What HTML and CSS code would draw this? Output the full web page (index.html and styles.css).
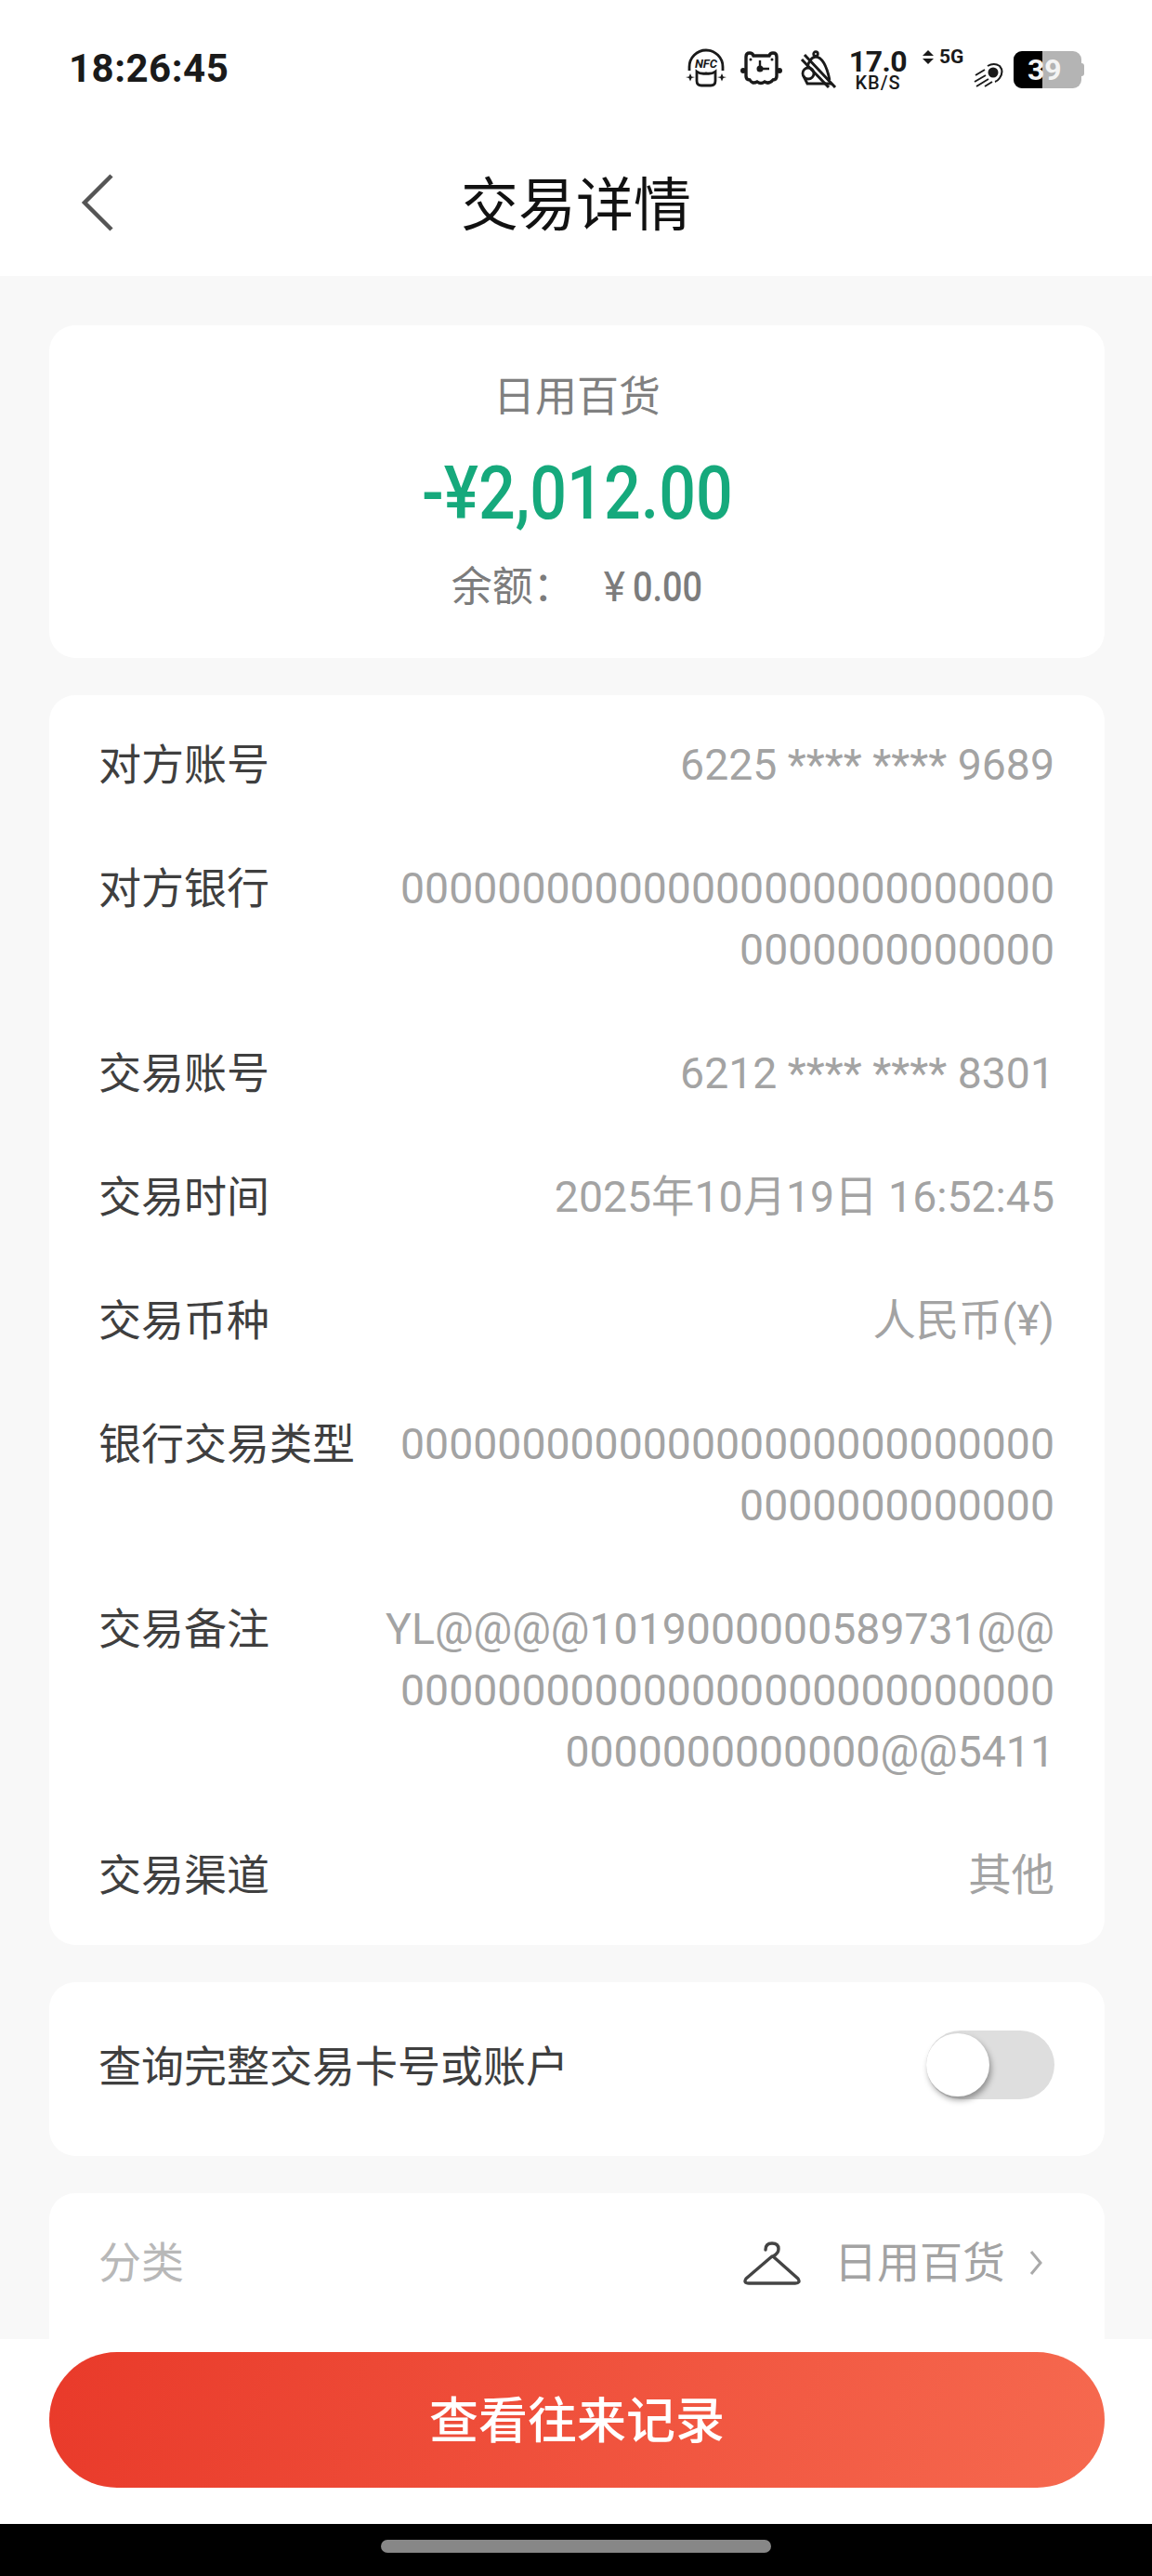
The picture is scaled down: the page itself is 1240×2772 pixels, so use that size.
FILE: index.html
```html
<!DOCTYPE html>
<html lang="zh-CN">

<head>
    <meta charset="UTF-8" />
    <meta name="viewport" content="width=device-width, initial-scale=1.0" />
    <title>交易详情</title>
    <link rel="stylesheet" href="styles.css">
</head>

<body>
    <div class="phone">
        <div class="statusbar">
            <span class="clock">18:26:45</span>
            <div class="status-icons">
                <svg class="ico ico-nfc" viewBox="0 0 42 40" width="42" height="40" fill="none" stroke="#1a1a1a" stroke-width="2.8">
                    <path d="M3 23 V19 A18 18 0 0 1 39 19 V23" />
                    <path d="M11 24 Q15 27 21 26 Q27 27 31 24 V34 Q31 39 26 39 H16 Q11 39 11 34 Z" />
                    <path d="M4 26 L5.5 29.5 L9 30 L5.5 31 L4 34.500 L2.500 31 L-1 30 L2.500 29.500 Z" fill="#1a1a1a" stroke="none" />
                    <path d="M38 26 L39.500 29.500 L43 30 L39.500 31 L38 34.500 L36.500 31 L33 30 L36.500 29.500 Z" fill="#1a1a1a" stroke="none" />
                    <text x="21" y="20" class="nfc">NFC</text>
                </svg>
                <svg class="ico ico-cat" viewBox="0 0 45 37" width="45" height="37" fill="none" stroke="#1a1a1a" stroke-width="3.4">
                    <path d="M6 6 Q6 2 10 2 Q13 2 14 5 H31 Q32 2 35 2 Q39 2 39 6 V27 Q39 31 35 31 Q31 36 26 33 Q22 36 18 33 Q13 36 10 31 Q6 31 6 27 Z" />
                    <circle cx="3" cy="21" r="3" fill="#1a1a1a" stroke="none" />
                    <circle cx="42" cy="21" r="3" fill="#1a1a1a" stroke="none" />
                    <circle cx="11" cy="9" r="1.500" fill="#1a1a1a" stroke="none" />
                    <circle cx="34" cy="9" r="1.500" fill="#1a1a1a" stroke="none" />
                    <path d="M21 10 V19 H31" stroke-width="2.400" />
                    <circle cx="21" cy="19" r="3.500" fill="#1a1a1a" stroke="none" />
                </svg>
                <svg class="ico ico-dish" viewBox="0 0 38 40" width="38" height="40" fill="none" stroke="#1a1a1a" stroke-width="2.8">
                    <circle cx="16" cy="3" r="2.300" />
                    <path d="M7 18 Q9 7 16 6 Q26 7 31 31" />
                    <circle cx="8" cy="24" r="6" />
                    <path d="M3 27 L7 35 H33" />
                    <path d="M4 4 L37 39 M1 9 L30 39" stroke-width="3" />
                </svg>
                <div class="speed"><b>17.0</b><small>KB/S</small></div>
                <div class="net"><span class="arrows"><i class="up"></i><i class="down"></i></span><b>5G</b></div>
                <svg class="ico comet" viewBox="0 0 32 26" width="32" height="26" fill="none" stroke="#1a1a1a" stroke-width="2">
                    <circle cx="21" cy="10" r="5.500" fill="#1a1a1a" stroke="none" />
                    <path d="M15 3 Q22 -1 28 3 Q33 9 28 16 Q26 19 23 20" />
                    <path d="M12 7 L2 13 M13 13 L1 20 M16 17 L3 25 M20 20 L12 25" />
                </svg>
                <div class="battery">
                    <span class="batt-fill"></span>
                    <span class="batt-num">39</span>
                </div>
            </div>
        </div>

        <header class="topbar">
            <svg class="back" viewBox="0 0 40 64" width="40" height="64" fill="none" stroke="#555" stroke-width="4.500">
                <path d="M36 3 L7 32 L36 61" />
            </svg>
            <h1>交易详情</h1>
        </header>

        <main class="content">
            <section class="card summary">
                <div class="sum-title">日用百货</div>
                <div class="sum-amount"><span class="narrow">-¥2,012.00</span></div>
                <div class="sum-balance"><span>余额：</span><span class="bal-yen">¥</span><span class="bal-num">0.00</span></div>
            </section>

            <section class="card details">
                <div class="row"><span class="lbl">对方账号</span><span class="val">6225 **** **** 9689</span></div>
                <div class="row"><span class="lbl">对方银行</span><span class="val">0000000000000000000000000000000000000000</span></div>
                <div class="row"><span class="lbl">交易账号</span><span class="val">6212 **** **** 8301</span></div>
                <div class="row"><span class="lbl">交易时间</span><span class="val">2025年10月19日 16:52:45</span></div>
                <div class="row"><span class="lbl">交易币种</span><span class="val">人民币(¥)</span></div>
                <div class="row"><span class="lbl">银行交易类型</span><span class="val">0000000000000000000000000000000000000000</span></div>
                <div class="row"><span class="lbl">交易备注</span><span class="val">YL@@@@1019000000589731@@<br>000000000000000000000000000<br>0000000000000@@5411</span></div>
                <div class="row"><span class="lbl">交易渠道</span><span class="val">其他</span></div>
            </section>

            <section class="card toggle-card">
                <span class="lbl">查询完整交易卡号或账户</span>
                <div class="switch"><span class="knob"></span></div>
            </section>

            <section class="card category">
                <span class="cat-lbl">分类</span>
                <div class="cat-val">
                    <svg class="hanger" viewBox="0 0 62 47" width="62" height="47" fill="none" stroke="#444" stroke-width="3.400" stroke-linecap="round" stroke-linejoin="round">
                        <path d="M24 9 Q24 2 31 2 Q38 2 38 8 Q38 13 32 16 L59 40 Q62 45 56 45 H6 Q0 45 3 40 L31 16" />
                    </svg>
                    <span>日用百货</span>
                    <svg class="chev" viewBox="0 0 14 28" width="14" height="28" fill="none" stroke="#aaa" stroke-width="3">
                        <path d="M2 2 L12 14 L2 26" />
                    </svg>
                </div>
            </section>
        </main>

        <footer class="bottom">
            <button class="main-btn">查看往来记录</button>
        </footer>

        <div class="navbar"><span class="pill"></span></div>
    </div>
</body>

</html>
```

FILE: styles.css
```css
* {
    box-sizing: border-box;
}

body {
    margin: 0;
    background: #f8f8f8;
    font-family: Roboto, "Noto Sans CJK SC", sans-serif;
}

.phone {
    width: 1240px;
    height: 2772px;
    display: flex;
    flex-direction: column;
    overflow: hidden;
}

/* status bar */
.statusbar {
    height: 148px;
    flex: none;
    background: #fff;
    display: flex;
    justify-content: space-between;
    align-items: flex-start;
    padding: 46px 73px 0 74px;
}

.clock {
    font-size: 42px;
    line-height: 56px;
    font-weight: 700;
    color: #1a1a1a;
    letter-spacing: 0.5px;
}

.status-icons {
    display: flex;
    align-items: flex-start;
    margin-top: 7px;
}

.ico {
    flex: none;
    overflow: visible;
}

.ico-cat {
    margin: 2px 0 0 16px;
}

.ico-dish {
    margin: 2px 0 0 20px;
}

.nfc {
    font: italic 700 13px Roboto, sans-serif;
    fill: #1a1a1a;
    stroke: none;
    text-anchor: middle;
}

.speed {
    width: 60px;
    margin-left: 15px;
    display: flex;
    flex-direction: column;
    align-items: center;
    color: #1a1a1a;
}

.speed b {
    font-size: 32px;
    line-height: 26px;
    letter-spacing: -0.5px;
    white-space: nowrap;
}

.speed small {
    font-size: 20px;
    line-height: 18px;
    margin-top: 1px;
    font-weight: 500;
    letter-spacing: 1px;
    white-space: nowrap;
}

.net {
    display: flex;
    align-items: center;
    gap: 6px;
    margin-left: 18px;
    color: #1a1a1a;
}

.net b {
    font-size: 21px;
    line-height: 16px;
    width: 27px;
}

.arrows {
    display: flex;
    flex-direction: column;
    gap: 3px;
}

.arrows i {
    display: block;
    width: 0;
    height: 0;
    border-left: 6px solid transparent;
    border-right: 6px solid transparent;
}

.arrows .up {
    border-bottom: 6px solid #1a1a1a;
}

.arrows .down {
    border-top: 6px solid #1a1a1a;
}

.comet {
    margin: 15px 0 0 10px;
}

.battery {
    position: relative;
    width: 73px;
    height: 40px;
    margin: 2px 3px 0 11px;
    border-radius: 9px;
    background: #b4b4b4;
    padding-left: 15px;
}

/* nub on the right of the battery */
.battery::after {
    content: "";
    position: absolute;
    right: -3px;
    top: 13px;
    width: 3px;
    height: 14px;
    border-radius: 0 3px 3px 0;
    background: #b4b4b4;
}

.batt-fill {
    position: absolute;
    left: 0;
    top: 0;
    bottom: 0;
    width: 31px;
    border-radius: 9px 0 0 9px;
    background: #000;
}

.batt-num {
    position: relative;
    font-size: 32px;
    line-height: 40px;
    font-weight: 700;
    color: #f4f4f4;
    display: block;
}

/* title */
.topbar {
    height: 149px;
    flex: none;
    background: #fff;
    display: flex;
    align-items: flex-start;
    justify-content: center;
    position: relative;
}

.back {
    position: absolute;
    left: 84px;
    top: 38px;
}

.topbar h1 {
    margin: 0;
    font-size: 62px;
    line-height: 90px;
    font-weight: 400;
    color: #111;
    padding-top: 29px;
}

/* body */
.content {
    flex: 1;
    min-height: 0;
    overflow: hidden;
    padding: 53px 51px 0 53px;
    display: flex;
    flex-direction: column;
    gap: 40px;
}

.card {
    background: #fff;
    border-radius: 28px;
    flex: none;
}

.summary {
    height: 358px;
    padding-top: 48px;
    text-align: center;
}

.sum-title {
    font-size: 45px;
    line-height: 60px;
    color: #808080;
}

.sum-amount {
    margin-top: 25px;
    font-size: 80px;
    line-height: 96px;
    font-weight: 500;
    color: #16a97c;
}

.narrow {
    display: inline-block;
    transform: scaleX(0.875);
}

.sum-balance {
    margin-top: 23px;
    font-size: 44px;
    line-height: 60px;
    color: #7c7c7c;
}

.bal-yen {
    margin-left: 32px;
    margin-right: 8px;
}

.bal-num {
    display: inline-block;
    font-weight: 500;
    transform: scaleX(0.86);
    transform-origin: left center;
    margin-right: -12px;
}

.details {
    height: 1345px;
    padding: 42px 54px 0 53px;
}

.row {
    display: flex;
    justify-content: space-between;
    gap: 20px;
    margin-bottom: 67px;
}

.lbl {
    font-size: 46px;
    line-height: 66px;
    color: #3f3f3f;
    white-space: nowrap;
}

.val {
    font-size: 46.4px;
    line-height: 66px;
    color: #a3a3a3;
    text-align: right;
    word-break: break-all;
    width: 725px;
}

.toggle-card {
    height: 187px;
    padding: 58px 54px 0 53px;
    display: flex;
    justify-content: space-between;
    align-items: flex-start;
}

.switch {
    width: 138px;
    height: 74px;
    border-radius: 37px;
    background: #dedede;
    position: relative;
    margin: -6px 0 0;
}

.knob {
    position: absolute;
    left: 0;
    top: 3px;
    width: 68px;
    height: 68px;
    border-radius: 50%;
    background: #fff;
    box-shadow: 2px 4px 6px rgba(0, 0, 0, 0.35);
}

.category {
    height: 240px;
    padding: 42px 54px 0 53px;
    display: flex;
    justify-content: space-between;
    align-items: flex-start;
}

.cat-lbl {
    font-size: 46px;
    line-height: 66px;
    color: #b8b8b8;
}

.cat-val {
    display: flex;
    align-items: center;
    font-size: 46px;
    line-height: 66px;
    color: #a3a3a3;
    padding-right: 13px;
}

.hanger {
    margin-right: 36px;
}

.chev {
    margin-left: 26px;
}

/* bottom button */
.bottom {
    height: 199px;
    flex: none;
    background: #fff;
    padding: 14px 51px 0 53px;
}

.main-btn {
    width: 100%;
    height: 146px;
    border: none;
    border-radius: 73px;
    background: linear-gradient(105deg, #e93a2a, #f6694f);
    color: #fff;
    font-family: "Noto Sans CJK SC", sans-serif;
    font-size: 53px;
    font-weight: 500;
    padding: 0 0 6px;
}

.navbar {
    height: 56px;
    flex: none;
    background: #000;
    display: flex;
    justify-content: center;
    padding-top: 17px;
}

.pill {
    width: 420px;
    height: 14px;
    border-radius: 7px;
    background: #878787;
}
```
